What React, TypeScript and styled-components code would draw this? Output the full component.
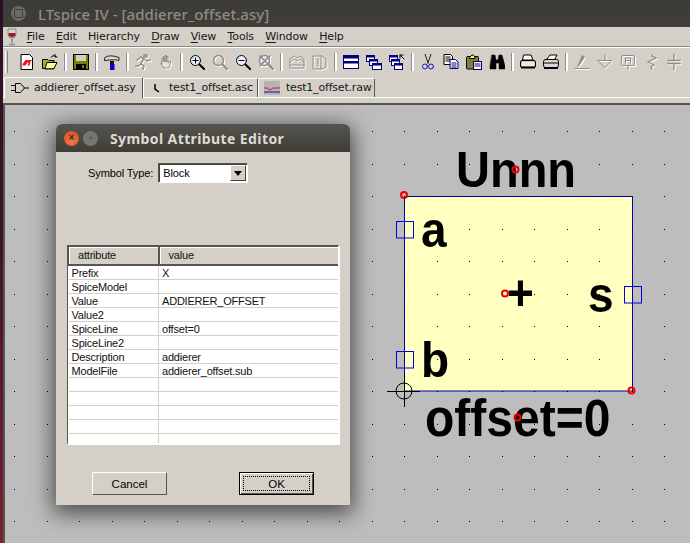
import React from 'react';
import styled, { createGlobalStyle } from 'styled-components';

const Global = createGlobalStyle`
    html, body { margin: 0; padding: 0; background: #bdbdbd; }
    * { box-sizing: border-box; }
`;

const Page = styled.div`
    display: flex;
    flex-direction: column;
    width: 690px;
    height: 543px;
    overflow: hidden;
    padding-left: 3px;
    background: linear-gradient(#2c0f26, #3a1228 40%, #7a2033);
    font-family: "DejaVu Sans", sans-serif;
    color: #000;
`;

const TitleBar = styled.div`
    display: flex;
    align-items: center;
    gap: 12px;
    height: 27px;
    flex: none;
    padding-left: 8px;
    background: linear-gradient(#3c3b37, #3f3e39);
    color: #8e8c84;
    font: 500 15px "Noto Sans", sans-serif;
    letter-spacing: .05px;
`;

const TitleDot = styled.span`
    display: flex;
    align-items: center;
    justify-content: center;
    width: 15px;
    height: 15px;
    border-radius: 50%;
    background: #6b6a65;
    &::after { content: ''; width: 7px; height: 7px; border: 1px solid #3f3e39; border-radius: 1px; }
`;

const Frame = styled.div`
    display: flex;
    flex-direction: column;
    flex: 1;
    min-height: 0;
    background: #d4d0c8;
`;

const MenuBar = styled.div`
    display: flex;
    align-items: center;
    height: 20px;
    flex: none;
    padding-left: 4px;
    border-bottom: 1px solid #8a8780;
`;

const WineGlass = styled.svg`
    width: 10px;
    height: 18px;
    margin-right: 4px;
    flex: none;
`;

const MenuItem = styled.span`
    padding: 0 5.7px;
    font-size: 11px;
    letter-spacing: -.15px;
    color: #16161a;
    u { text-decoration-thickness: 1px; text-underline-offset: 2px; }
`;

const ToolBar = styled.div`
    display: flex;
    align-items: center;
    height: 29px;
    flex: none;
    padding-left: 2px;
    border-top: 1px solid #fff;
`;

const Grip = styled.span`
    width: 3px;
    height: 22px;
    margin-right: 7.5px;
    background: #d4d0c8;
    border-left: 1px solid #fff;
    border-right: 1px solid #808080;
`;

const Sep = styled.span`
    width: 8px;
    display: flex;
    justify-content: center;
    flex: none;
    &::after { content: ''; width: 2px; height: 18px; background: #fff; border-left: 1px solid #8c8c8c; }
`;

const ToolIcon = styled.span<{ $off?: boolean }>`
    display: flex;
    align-items: center;
    justify-content: center;
    width: 23px;
    height: 18px;
    flex: none;
    svg { width: 16px; height: 16px; display: block; ${p => (p.$off ? 'filter: drop-shadow(1px 1px 0 #fff);' : '')} }
`;

const TabRow = styled.div`
    display: flex;
    align-items: flex-end;
    height: 22px;
    flex: none;
    padding-left: 1px;
    border-bottom: 1px solid #fff;
`;

const Tab = styled.div<{ $active?: boolean; $w: number; $pad: number; $gap: number }>`
    display: flex;
    align-items: center;
    gap: ${p => p.$gap}px;
    width: ${p => p.$w}px;
    height: ${p => (p.$active ? 21 : 19)}px;
    padding: 0 0 1px ${p => p.$pad}px;
    font-size: 11px;
    letter-spacing: -.2px;
    color: #16161a;
    background: #d4d0c8;
    border-top: 1px solid #fff;
    border-left: 1px solid #fff;
    border-right: 1px solid #555;
    border-radius: 2px 2px 0 0;
    margin-bottom: ${p => (p.$active ? -1 : 0)}px;
    svg { flex: none; }
`;

const CanvasGap = styled.div`
    height: 7px;
    flex: none;
    border-bottom: 2px solid #55544f;
`;

const Canvas = styled.div`
    position: relative;
    flex: 1;
    min-height: 0;
    background: #bdbdbd;
    border-left: 2px solid #55544f;
    overflow: hidden;
`;

// page coordinates, so the symbol's parts can be read straight off the schematic
const Sheet = styled.div`
    position: absolute;
    left: -5px;
    top: -105px;
    width: 690px;
    height: 543px;
`;

const SheetArt = styled.svg`
    position: absolute;
    inset: 0;
    width: 690px;
    height: 543px;
`;

const SymbolText = styled.span<{ $x: number; $y: number; $size: number }>`
    position: absolute;
    left: ${p => p.$x}px;
    top: ${p => p.$y}px;
    font: 700 ${p => p.$size}px/1 "Liberation Sans", sans-serif;
    color: #000;
    white-space: nowrap;
    transform: scaleY(1.08);
`;

const Dialog = styled.div`
    position: absolute;
    left: 51px;
    top: 19px;
    display: flex;
    flex-direction: column;
    width: 294px;
    height: 381px;
    background: #d4d0c8;
    border-radius: 6px 6px 0 0;
    box-shadow: 0 5px 22px 3px rgba(0, 0, 0, .62);
    font-family: "Liberation Sans", sans-serif;
`;

const DialogTitle = styled.div`
    display: flex;
    align-items: center;
    height: 28px;
    flex: none;
    padding-left: 8px;
    background: linear-gradient(#55544e, #3e3d38);
    border-radius: 6px 6px 0 0;
    color: #dfdbd2;
    font: 700 14px "Noto Sans", sans-serif;
    letter-spacing: .4px;
`;

const WinButton = styled.span<{ $close?: boolean }>`
    display: flex;
    align-items: center;
    justify-content: center;
    width: 15px;
    height: 15px;
    margin-right: 4px;
    border-radius: 50%;
    background: ${p => (p.$close ? 'radial-gradient(circle at 50% 70%, #f3764a, #d9481f)' : '#77766f')};
    color: #3a2a22;
    font: 700 10px/1 "Liberation Sans", sans-serif;
    letter-spacing: 0;
`;

const TitleText = styled.span`
    margin-left: 8px;
`;

const TypeRow = styled.div`
    display: flex;
    align-items: center;
    gap: 5px;
    height: 20px;
    margin: 11px 0 0 32px;
    font-size: 11px;
    letter-spacing: -.1px;
`;

const SelectBox = styled.div`
    position: relative;
    display: flex;
    align-items: center;
    width: 90px;
    height: 20px;
    padding-left: 4px;
    background: #fff;
    border: 1px solid;
    border-color: #55544f #fff #fff #55544f;
    box-shadow: inset 1px 1px 0 #404040;
    font-size: 11px;
`;

const SelectArrow = styled.span`
    position: absolute;
    right: 1px;
    top: 1px;
    display: flex;
    align-items: center;
    justify-content: center;
    width: 16px;
    height: 16px;
    background: #d4d0c8;
    border: 1px solid;
    border-color: #fff #404040 #404040 #fff;
    &::after { content: ''; border: 4px solid transparent; border-top: 5px solid #000; border-bottom: 0; }
`;

const TableFrame = styled.div`
    width: 273px;
    height: 200px;
    margin: 62px 0 0 11px;
    background: #fff;
    border: 1px solid;
    border-color: #55544f #fff #fff #55544f;
    border-width: 1px 2px 2px 1px;
    overflow: hidden;
`;

const AttrTable = styled.table`
    width: 100%;
    border-collapse: collapse;
    table-layout: fixed;
    font-size: 11px;
    letter-spacing: -.2px;
    color: #111;
`;

const HeadCell = styled.th<{ $w: number }>`
    width: ${p => p.$w}px;
    height: 18px;
    padding: 0 0 0 9px;
    background: #d4d0c8;
    font-weight: 400;
    font-size: 11px;
    text-align: left;
    border: 1px solid #55544f;
    border-right-width: 2px;
    border-bottom-width: 2px;
    box-shadow: inset 1px 1px 0 #fff;
`;

const Cell = styled.td`
    height: 14px;
    padding: 2px 0 0 3px;
    line-height: 11px;
    white-space: nowrap;
    border-bottom: 1px solid #d4d0c8;
    border-right: 1px solid #d4d0c8;
    &:last-child { border-right: 0; }
`;

const HeadGap = styled.tr`
    height: 1px;
`;

const ButtonRow = styled.div`
    display: flex;
    justify-content: space-between;
    margin: 27px 36px 0;
`;

const PushButton = styled.button<{ $default?: boolean }>`
    position: relative;
    width: 75px;
    height: 23px;
    padding: 0;
    background: #d4d0c8;
    font: 11.5px "Liberation Sans", sans-serif;
    color: #000;
    border: 1px solid;
    border-color: ${p => (p.$default ? '#000' : '#fff #55544f #55544f #fff')};
    box-shadow: ${p => (p.$default ? 'inset 1px 1px 0 #fff, inset -1px -1px 0 #55544f' : 'none')};
    &::after {
        content: '';
        display: ${p => (p.$default ? 'block' : 'none')};
        position: absolute;
        inset: 3px;
        border: 1px dotted #000;
    }
`;

const gridX = Array.from({ length: 21 }, (_, i) => Math.round(14.4 + i * 32.5));
const gridY = Array.from({ length: 14 }, (_, i) => Math.round(98.7 + i * 32.5));

const rows: [string, string][] = [
    ['Prefix', 'X'],
    ['SpiceModel', ''],
    ['Value', 'ADDIERER_OFFSET'],
    ['Value2', ''],
    ['SpiceLine', 'offset=0'],
    ['SpiceLine2', ''],
    ['Description', 'addierer'],
    ['ModelFile', 'addierer_offset.sub'],
    ['', ''],
    ['', ''],
    ['', ''],
    ['', ''],
    ['', ''],
];

const Px: React.FC<{ children: React.ReactNode }> = ({ children }) => (
    <svg viewBox="0 0 16 16" fill="none" strokeLinecap="square">{children}</svg>
);

const Lens = ({ mark }: { mark?: 'plus' | 'minus' }) => (
    <>
        <circle cx="6.5" cy="6.5" r="5" stroke="#000" fill="#eef" />
        <path d="M3 4.5A4 4 0 0 1 5 2.5" stroke="#28c8d8" />
        <path d="M10.5 10.5l4.5 4.5" stroke="#000" strokeWidth="2" />
        {mark && <path d="M4 6.5h5" stroke="#000" />}
        {mark === 'plus' && <path d="M6.5 4v5" stroke="#000" />}
    </>
);

const GrayLens = ({ cross }: { cross?: boolean }) => (
    <>
        <circle cx="6.5" cy="6.5" r="5" stroke="#8c8c8c" strokeWidth="1.5" />
        <path d="M10.5 10.5l4.5 4.5" stroke="#8c8c8c" strokeWidth="2" />
        {cross && <path d="M2 2l11 11M12 2L2 12" stroke="#8c8c8c" strokeWidth="1.5" />}
    </>
);

const Tile = ({ x, y, w, h }: { x: number; y: number; w: number; h: number }) => (
    <>
        <rect x={x + .5} y={y + .5} width={w} height={h} fill="#fff" stroke="#000080" />
        <rect x={x} y={y} width={w + 1} height="2.5" fill="#000080" />
    </>
);

const tools: (null | { off?: boolean; art: React.ReactNode })[] = [
    { art: <><path d="M2.5.5h8l3 3v12h-11z" fill="#fff" stroke="#000" /><path d="M3.5 10l3-4h7l-2 1.5-1 4h-2l1-3h-1l-2 3h-3z" fill="#e8141c" /></> },
    { art: <><path d="M1 5.5h5l1 1h5v8H1z" fill="#a8a838" stroke="#000" /><path d="M3 14.5l2-6h10l-3 6z" fill="#ffff9c" stroke="#000" /><path d="M9 3q2-2.500 4-1M13 .5v2.500h2" stroke="#000" /></> },
    null,
    { art: <><rect x=".5" y=".5" width="15" height="15" fill="#808000" stroke="#000" /><rect x="3" y="1" width="10" height="6" fill="#d4d0c8" /><rect x="3" y="10" width="10" height="5" fill="#000" /><rect x="9" y="11" width="2" height="3" fill="#808000" /></> },
    null,
    { art: <><path d="M1 3.500q4-3.500 14 0v3q-4-1.500-14 0z" fill="#d8d8d8" stroke="#222" /><rect x="6" y="7" width="4" height="4" fill="#111" /><rect x="6" y="10" width="4.500" height="6" fill="#0000c8" /></> },
    null,
    { off: true, art: <path d="M9 1h3v2H9zM2 6l4-3 3 2 3 2 3-1M8 6L6 10l3 2-1 3M6 10l-3 2-2 0" stroke="#8c8c8c" strokeWidth="1.500" /> },
    { off: true, art: <path d="M4 9V4h1.500v4V2.500H7V8V1.500h1.500V8V2.500H10V9l1.500-2 1.500.5-2 6.500H6L3 10z" fill="#e4e2dc" stroke="#8c8c8c" /> },
    null,
    { art: <Lens mark="plus" /> },
    { off: true, art: <GrayLens /> },
    { art: <Lens mark="minus" /> },
    { off: true, art: <GrayLens cross /> },
    null,
    { off: true, art: <path d="M1 5l4-3 3 2 3-2 4 3v9H1zM1 8l4-3 3 2 3-2 4 3M1 11h14" stroke="#8c8c8c" strokeDasharray="2 1" /> },
    { off: true, art: <path d="M1 2h9l4 3v8l-4 2H1zM9 2v13M6 5v7" stroke="#8c8c8c" strokeDasharray="2 1" /> },
    null,
    { art: <><rect x=".5" y="1.500" width="15" height="13" fill="#fff" stroke="#000080" /><rect x="1" y="2" width="14" height="2.500" fill="#000080" /><rect x="1" y="7" width="14" height="2.500" fill="#000080" /></> },
    { art: <><Tile x={0} y={1} w={8} h={6} /><Tile x={3} y={5} w={8} h={6} /><Tile x={6} y={9} w={9} h={6} /></> },
    { art: <><Tile x={0} y={1} w={8} h={6} /><Tile x={2} y={5} w={8} h={6} /><Tile x={5} y={9} w={8} h={6} /><path d="M11 4V1h3M11 1l4 4" stroke="#000" /></> },
    null,
    { art: <><path d="M5 0l3 9M11 0L8 9" stroke="#222" /><circle cx="5" cy="12.500" r="2.500" stroke="#1c1ca8" /><circle cx="11" cy="12.500" r="2.500" stroke="#1c1ca8" /></> },
    { art: <><path d="M1.500.5h6l2 2v8h-8z" fill="#fff" stroke="#000" /><path d="M3 3h4M3 5h4M3 7h4" stroke="#000" /><path d="M7.500 5.500h5l2.500 2.500v6.500H7.500z" fill="#fff" stroke="#000080" /><path d="M9 9h4M9 11h4M9 13h4" stroke="#000080" /></> },
    { art: <><rect x=".5" y="2.500" width="12" height="12.500" rx="1" fill="#808040" stroke="#000" /><path d="M4 3l2-2h1l2 2v1.500H4z" fill="#ffff40" stroke="#000" /><rect x="7.500" y="7.500" width="8" height="8" fill="#fff" stroke="#000080" /><path d="M9 10h5M9 12h5" stroke="#000080" /></> },
    { art: <path d="M3 1h3l1 5h2l1-5h3l3 11v3h-6V9H7v6H1v-3z" fill="#000" stroke="#000" strokeWidth=".5" /> },
    null,
    { art: <><path d="M4 1h7l2 5H3z" fill="#fff" stroke="#000" /><rect x=".5" y="6.500" width="15" height="7" rx="1.500" fill="#c8c8c8" stroke="#000" /><path d="M2 8h12v4H2z" fill="#e8e8e8" /><path d="M2 13.500h12" stroke="#000" strokeWidth="2" /></> },
    { art: <><path d="M4 5l3-4h7l-2 4z" fill="#fff" stroke="#000" /><rect x=".5" y="5.500" width="15" height="8" rx="2" fill="#d8d8d8" stroke="#000" /><path d="M1 9h14" stroke="#000" /><rect x="8" y="7" width="3" height="1" fill="#e0d020" /><path d="M2 14h12" stroke="#000" strokeWidth="2" /></> },
    null,
    { off: true, art: <><path d="M8 1l3 2-6 9-2 1z" fill="#8c8c8c" /><path d="M1 14.500h14" stroke="#8c8c8c" /></> },
    { off: true, art: <path d="M8 0v6M1 6.500h14L8 13.500z" stroke="#8c8c8c" /> },
    { off: true, art: <><rect x="1.500" y="1.500" width="13" height="10" rx="1.500" stroke="#8c8c8c" /><path d="M5.500 9V4h5v5M5.500 6.500h5M8 12v4" stroke="#8c8c8c" /></> },
    { off: true, art: <path d="M10 0l-1 2 4 2-8 4 6 3-3 2 1 3" stroke="#8c8c8c" strokeWidth="1.300" /> },
    { off: true, art: <path d="M8 0v6M2 6.500h12M2 9.500h12M8 10v6" stroke="#8c8c8c" strokeWidth="1.300" /> },
];

const Marker = ({ x, y }: { x: number; y: number }) => (
    <circle cx={x} cy={y} r="3" fill="none" stroke="#f00000" strokeWidth="2" />
);

export default function App() {
    return (
        <Page>
            <Global />
            <TitleBar>
                <TitleDot />
                LTspice IV - [addierer_offset.asy]
            </TitleBar>
            <Frame>
                <MenuBar>
                    <WineGlass viewBox="0 0 10 18" fill="none">
                        <path d="M1 1h8v5q0 4-4 4T1 6z" fill="#d8d4cc" stroke="#8a8780" />
                        <path d="M1.500 5h7v1q0 3-3.500 3t-3.500-3z" fill="#a01828" />
                        <path d="M5 10v5M2 16.500h6" stroke="#8a8780" strokeWidth="1.500" />
                    </WineGlass>
                    <MenuItem><u>F</u>ile</MenuItem>
                    <MenuItem><u>E</u>dit</MenuItem>
                    <MenuItem>H<u>i</u>erarchy</MenuItem>
                    <MenuItem><u>D</u>raw</MenuItem>
                    <MenuItem><u>V</u>iew</MenuItem>
                    <MenuItem><u>T</u>ools</MenuItem>
                    <MenuItem><u>W</u>indow</MenuItem>
                    <MenuItem><u>H</u>elp</MenuItem>
                </MenuBar>
                <ToolBar>
                    <Grip />
                    {tools.map((t, i) =>
                        t ? <ToolIcon key={i} $off={t.off}><Px>{t.art}</Px></ToolIcon> : <Sep key={i} />
                    )}
                </ToolBar>
                <TabRow>
                    <Tab $active $w={139} $pad={6} $gap={5}>
                        <svg width="18" height="12" viewBox="0 0 18 12" fill="none" stroke="#000">
                            <path d="M0 3.500h4M0 8.500h4M4.500 1.500h5l4 4.500-4 4.500h-5zM13 6h5" />
                        </svg>
                        addierer_offset.asy
                    </Tab>
                    <Tab $w={115} $pad={6} $gap={1}>
                        <svg width="18" height="12" viewBox="0 0 18 12" fill="none" stroke="#000" strokeWidth="1.500">
                            <path d="M5 2v5l4 3" />
                        </svg>
                        test1_offset.asc
                    </Tab>
                    <Tab $w={117} $pad={5} $gap={6}>
                        <svg width="16" height="14" viewBox="0 0 16 14">
                            <rect width="16" height="14" fill="#b4b4b4" />
                            <path d="M0 7h3l3 2 3-2 7 0" fill="none" stroke="#e01010" />
                            <path d="M0 11h16" stroke="#1010c0" />
                        </svg>
                        test1_offset.raw
                    </Tab>
                </TabRow>
                <CanvasGap />
                <Canvas>
                    <Sheet>
                        <SheetArt viewBox="0 0 690 543" fill="none">
                            <rect x="404.500" y="196.500" width="228" height="194.500" fill="#ffffc0" stroke="#0000b8" />
                            {gridX.map(x => gridY.map(y => (
                                <rect key={`${x}-${y}`} x={x} y={y} width="1" height="1" fill="#000" />
                            )))}
                            <g stroke="#0000e0">
                                <rect x="396.500" y="221.500" width="17" height="16.500" />
                                <rect x="396.500" y="351.500" width="17" height="16.500" />
                                <rect x="624.500" y="286.500" width="17" height="16.500" />
                            </g>
                            <g stroke="#000">
                                <circle cx="404" cy="391" r="8" />
                                <path d="M387 391.500h33M404.500 374v33" />
                            </g>
                        </SheetArt>
                        <SymbolText $x={456} $y={146} $size={47}>Unnn</SymbolText>
                        <SymbolText $x={421} $y={207} $size={46}>a</SymbolText>
                        <SymbolText $x={507} $y={270} $size={46}>+</SymbolText>
                        <SymbolText $x={588} $y={272} $size={46}>s</SymbolText>
                        <SymbolText $x={421} $y={337} $size={46}>b</SymbolText>
                        <SymbolText $x={425} $y={395} $size={48}>offset=0</SymbolText>
                        <SheetArt viewBox="0 0 690 543" fill="none">
                            <Marker x={404} y={195} />
                            <Marker x={515.500} y={169.500} />
                            <Marker x={505} y={293.500} />
                            <Marker x={631.500} y={390.500} />
                            <Marker x={517.500} y={417.500} />
                        </SheetArt>
                    </Sheet>
                    <Dialog>
                        <DialogTitle>
                            <WinButton $close>×</WinButton>
                            <WinButton>▫</WinButton>
                            <TitleText>Symbol Attribute Editor</TitleText>
                        </DialogTitle>
                        <TypeRow>
                            Symbol Type:
                            <SelectBox>Block<SelectArrow /></SelectBox>
                        </TypeRow>
                        <TableFrame>
                            <AttrTable>
                                <thead>
                                    <tr>
                                        <HeadCell $w={90}>attribute</HeadCell>
                                        <HeadCell $w={180}>value</HeadCell>
                                    </tr>
                                    <HeadGap />
                                </thead>
                                <tbody>
                                    {rows.map(([name, value], i) => (
                                        <tr key={i}>
                                            <Cell>{name}</Cell>
                                            <Cell>{value}</Cell>
                                        </tr>
                                    ))}
                                </tbody>
                            </AttrTable>
                        </TableFrame>
                        <ButtonRow>
                            <PushButton>Cancel</PushButton>
                            <PushButton $default>OK</PushButton>
                        </ButtonRow>
                    </Dialog>
                </Canvas>
            </Frame>
        </Page>
    );
}
